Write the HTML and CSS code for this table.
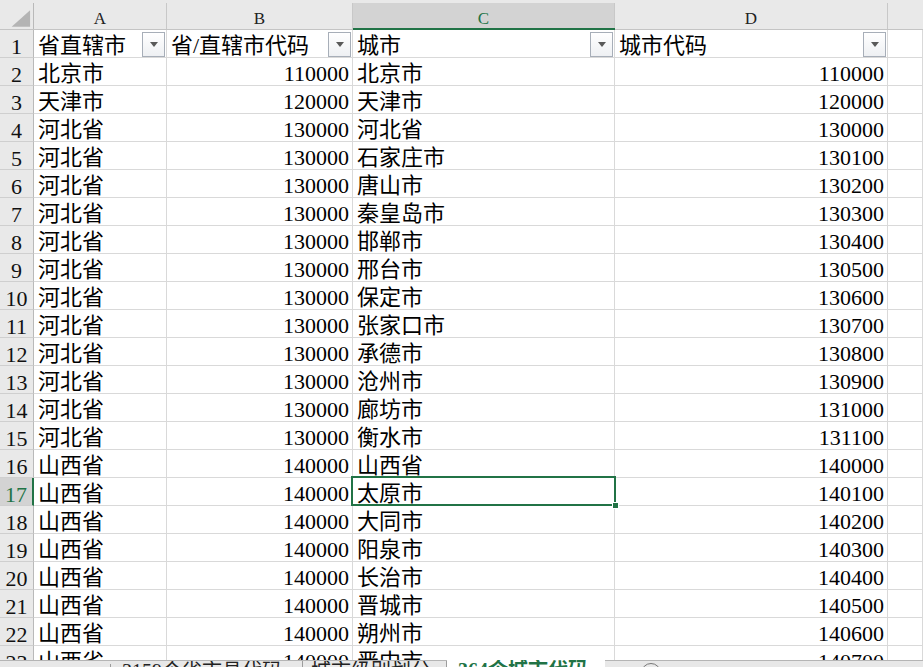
FILE: index.html
```html
<!DOCTYPE html>
<html lang="zh-CN">
<head>
<meta charset="utf-8">
<title>364个城市代码</title>
<link rel="stylesheet" href="styles.css">
</head>
<body>
<div class="app">
  <div class="sheet">
    <div class="grid">
      <div class="hdr corner"><div class="hin"><svg width="34" height="27" viewBox="0 0 34 27"><polygon points="31,7 31,24 12,24" fill="#b4b4b4"/></svg></div></div>
      <div class="hdr"><div class="hin">A</div></div>
      <div class="hdr"><div class="hin">B</div></div>
      <div class="hdr sel"><div class="hin">C</div></div>
      <div class="hdr"><div class="hin">D</div></div>
      <div class="hdr last"><div class="hin"></div></div>

      <div class="rh">1</div>
      <div class="c f"><span>省直辖市</span><i class="fb"></i></div>
      <div class="c f"><span>省/直辖市代码</span><i class="fb"></i></div>
      <div class="c f"><span>城市</span><i class="fb"></i></div>
      <div class="c f"><span>城市代码</span><i class="fb"></i></div>
      <div class="c"></div>

      <div class="rh">2</div><div class="c">北京市</div><div class="c n">110000</div><div class="c">北京市</div><div class="c n">110000</div><div class="c"></div>
      <div class="rh">3</div><div class="c">天津市</div><div class="c n">120000</div><div class="c">天津市</div><div class="c n">120000</div><div class="c"></div>
      <div class="rh">4</div><div class="c">河北省</div><div class="c n">130000</div><div class="c">河北省</div><div class="c n">130000</div><div class="c"></div>
      <div class="rh">5</div><div class="c">河北省</div><div class="c n">130000</div><div class="c">石家庄市</div><div class="c n">130100</div><div class="c"></div>
      <div class="rh">6</div><div class="c">河北省</div><div class="c n">130000</div><div class="c">唐山市</div><div class="c n">130200</div><div class="c"></div>
      <div class="rh">7</div><div class="c">河北省</div><div class="c n">130000</div><div class="c">秦皇岛市</div><div class="c n">130300</div><div class="c"></div>
      <div class="rh">8</div><div class="c">河北省</div><div class="c n">130000</div><div class="c">邯郸市</div><div class="c n">130400</div><div class="c"></div>
      <div class="rh">9</div><div class="c">河北省</div><div class="c n">130000</div><div class="c">邢台市</div><div class="c n">130500</div><div class="c"></div>
      <div class="rh">10</div><div class="c">河北省</div><div class="c n">130000</div><div class="c">保定市</div><div class="c n">130600</div><div class="c"></div>
      <div class="rh">11</div><div class="c">河北省</div><div class="c n">130000</div><div class="c">张家口市</div><div class="c n">130700</div><div class="c"></div>
      <div class="rh">12</div><div class="c">河北省</div><div class="c n">130000</div><div class="c">承德市</div><div class="c n">130800</div><div class="c"></div>
      <div class="rh">13</div><div class="c">河北省</div><div class="c n">130000</div><div class="c">沧州市</div><div class="c n">130900</div><div class="c"></div>
      <div class="rh">14</div><div class="c">河北省</div><div class="c n">130000</div><div class="c">廊坊市</div><div class="c n">131000</div><div class="c"></div>
      <div class="rh">15</div><div class="c">河北省</div><div class="c n">130000</div><div class="c">衡水市</div><div class="c n">131100</div><div class="c"></div>
      <div class="rh">16</div><div class="c">山西省</div><div class="c n">140000</div><div class="c">山西省</div><div class="c n">140000</div><div class="c"></div>
      <div class="rh rsel">17</div><div class="c">山西省</div><div class="c n">140000</div><div class="c active">太原市<span class="selbox"><span class="handle"></span></span></div><div class="c n">140100</div><div class="c"></div>
      <div class="rh">18</div><div class="c">山西省</div><div class="c n">140000</div><div class="c">大同市</div><div class="c n">140200</div><div class="c"></div>
      <div class="rh">19</div><div class="c">山西省</div><div class="c n">140000</div><div class="c">阳泉市</div><div class="c n">140300</div><div class="c"></div>
      <div class="rh">20</div><div class="c">山西省</div><div class="c n">140000</div><div class="c">长治市</div><div class="c n">140400</div><div class="c"></div>
      <div class="rh">21</div><div class="c">山西省</div><div class="c n">140000</div><div class="c">晋城市</div><div class="c n">140500</div><div class="c"></div>
      <div class="rh">22</div><div class="c">山西省</div><div class="c n">140000</div><div class="c">朔州市</div><div class="c n">140600</div><div class="c"></div>
      <div class="rh">23</div><div class="c">山西省</div><div class="c n">140000</div><div class="c">晋中市</div><div class="c n">140700</div><div class="c"></div>
    </div>
  </div>
  <div class="tabs">
    <div class="nav"></div>
    <div class="tab t1">3159个省市县代码</div>
    <div class="tab t2">城市级别划分</div>
    <div class="tab on">364个城市代码</div>
    <div class="add"><span class="plus"></span></div>
  </div>
</div>
</body>
</html>
```

FILE: styles.css
```css
html, body {
  margin: 0;
  padding: 0;
  width: 923px;
  height: 667px;
  overflow: hidden;
  background: #ffffff;
}

.app {
  display: flex;
  flex-direction: column;
  height: 667px;
  font-family: "Liberation Serif", "Noto Sans CJK SC", serif;
  color: #000;
}

.sheet {
  flex: 0 0 660px;
  overflow: hidden;
}

.grid {
  display: grid;
  grid-template-columns: 34px 133px 186px 262px 273px 35px;
  grid-template-rows: 30px;
  grid-auto-rows: 28px;
}

.hdr {
  background: #e9e9e9;
  padding-top: 3px;
  box-sizing: border-box;
  border-bottom: 1px solid #c4c4c4;
}

.hin {
  height: 100%;
  box-sizing: border-box;
  border-right: 1px solid #c8c8c8;
  display: flex;
  align-items: center;
  justify-content: center;
  font-size: 17px;
  color: #222;
  padding-top: 6px;
}

.corner .hin {
  border-right: 1px solid #b9b9b9;
  align-items: flex-start;
  padding-top: 0;
}

.corner svg {
  display: block;
}

.hdr.last .hin {
  border-right: none;
}

.hdr.sel {
  border-bottom: 2px solid #217346;
}

.hdr.sel .hin {
  background: #d3d3d3;
  color: #217346;
}

.rh {
  background: #e9e9e9;
  box-sizing: border-box;
  border-bottom: 1px solid #cfcfcf;
  border-right: 1px solid #b9b9b9;
  display: flex;
  align-items: center;
  justify-content: center;
  font-size: 22px;
  color: #111;
  padding-top: 6px;
}

.rh.rsel {
  background: #d3d3d3;
  border-right: 2px solid #217346;
  color: #217346;
}

.c {
  box-sizing: border-box;
  border-right: 1px solid #d9d9d9;
  border-bottom: 1px solid #d9d9d9;
  font-size: 22px;
  line-height: 22px;
  padding: 5px 0 0 4px;
  white-space: nowrap;
  display: flex;
  align-items: center;
}

.c.n {
  justify-content: flex-end;
  padding: 5px 3px 0 0;
}

.c.f {
  justify-content: space-between;
  padding-right: 0;
}

.fb {
  flex: 0 0 auto;
  width: 23px;
  height: 25px;
  box-sizing: border-box;
  margin: -3px 1px 0 0;
  border: 1px solid #a7aeb8;
  background: linear-gradient(#ffffff, #eef0f3);
  display: flex;
  align-items: center;
  justify-content: center;
}

.fb::after {
  content: "";
  width: 0;
  height: 0;
  border-left: 4px solid transparent;
  border-right: 4px solid transparent;
  border-top: 5px solid #595959;
}

.c.active {
  position: relative;
}

.selbox {
  position: absolute;
  left: -2px;
  top: -2px;
  right: -2px;
  bottom: -1px;
  border: 2px solid #217346;
  pointer-events: none;
}

.handle {
  position: absolute;
  right: -5px;
  bottom: -5px;
  width: 7px;
  height: 7px;
  background: #217346;
  border: 1px solid #ffffff;
  box-sizing: border-box;
}

.tabs {
  flex: 0 0 34px;
  display: flex;
  background: #e8e8e8;
  border-top: 1px solid #b5b5b5;
  box-sizing: border-box;
  font-size: 20px;
  line-height: 20px;
  position: relative;
  z-index: 2;
}

.nav {
  flex: 0 0 111px;
  box-sizing: border-box;
  border-right: 1px solid #9c9c9c;
  margin-top: 3px;
}

.tab {
  box-sizing: border-box;
  padding: 0 0 0 11px;
  color: #222;
  white-space: nowrap;
  overflow: hidden;
}

.tab.t1 {
  flex: 0 0 192px;
  border-right: 1px solid #9c9c9c;
  margin-top: 3px;
  padding-top: 0;
  position: relative;
  top: -3px;
  height: 30px;
}

.tab.t2 {
  flex: 0 0 144px;
  border-right: 1px solid #9c9c9c;
  margin-top: 3px;
  position: relative;
  top: -3px;
  height: 30px;
  padding-left: 8px;
}

.tab.on {
  flex: 0 0 158px;
  background: #ffffff;
  color: #217346;
  margin-top: -1px;
  padding-left: 11px;
  font-weight: bold;
}

.add {
  flex: 1;
  padding: 2px 0 0 36px;
}

.plus {
  display: block;
  width: 18px;
  height: 18px;
  border: 1px solid #777;
  border-radius: 50%;
}
```
